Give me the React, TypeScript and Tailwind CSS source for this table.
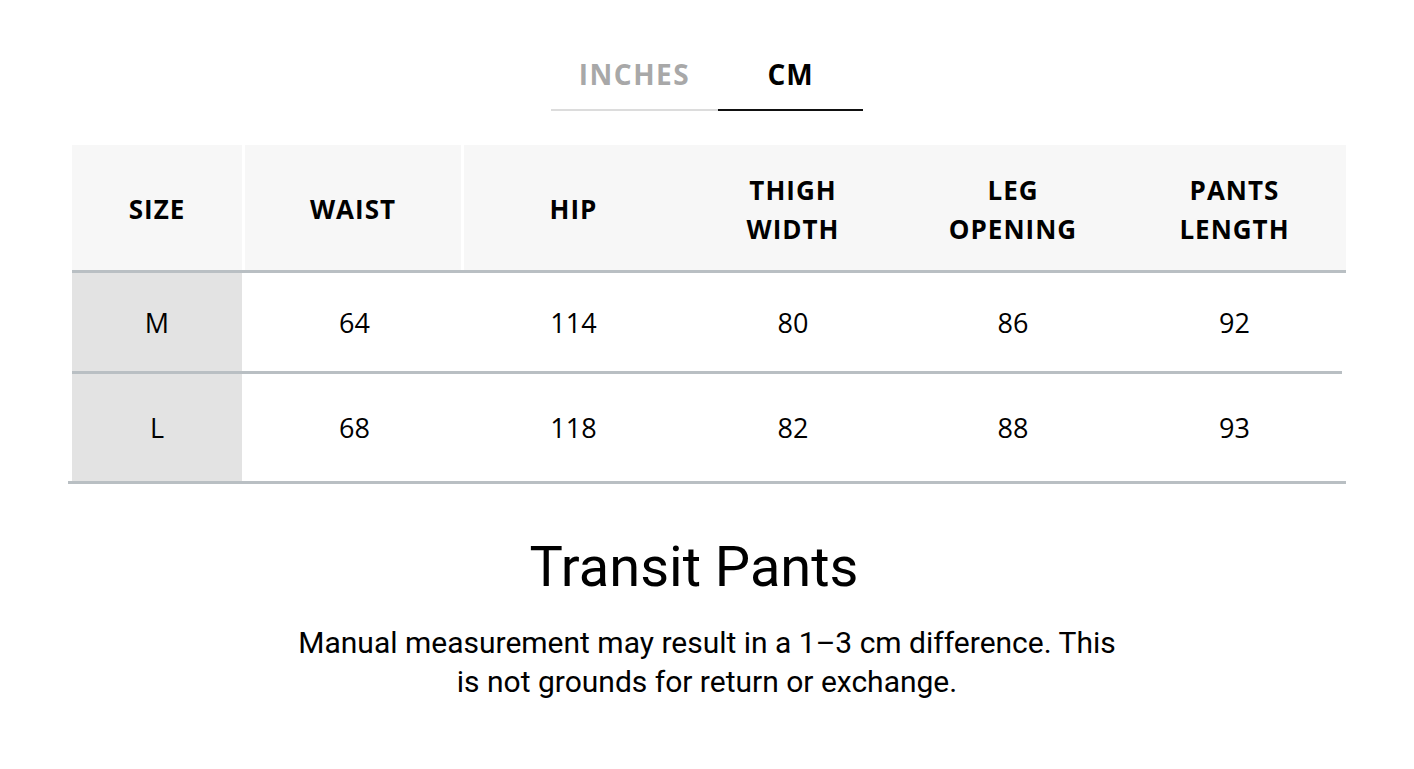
import React from "react";

const headW = ["w-[173px]", "w-[219px]", "w-[219px]", "w-[220px]", "w-[220px]", "w-[223px]"];
const bodyW = ["w-[170px]", "w-[222px]", "w-[219px]", "w-[220px]", "w-[220px]", "w-[223px]"];

const headers = [["SIZE"], ["WAIST"], ["HIP"], ["THIGH", "WIDTH"], ["LEG", "OPENING"], ["PANTS", "LENGTH"]];

const rows = [
  { vals: ["M", "64", "114", "80", "86", "92"], h: "h-[98px]" },
  { vals: ["L", "68", "118", "82", "88", "93"], h: "h-[107px]" },
];

export default function App() {
  return (
    <div className="w-[1414px] h-[769px] bg-white text-black" style={{ fontFamily: "'Open Sans', 'Noto Sans', sans-serif" }}>
      {/* Tabs */}
      <div className="flex justify-center pt-[56px]">
        <div className="flex">
          <div className="w-[167px] h-[55px] flex items-start justify-center border-b-2 border-[#dcdcdc]">
            <span className="text-[28px] leading-[37px] font-bold tracking-[1.5px] text-[#a8a8a8]">INCHES</span>
          </div>
          <div className="w-[145px] h-[55px] flex items-start justify-center border-b-2 border-[#111111]">
            <span className="text-[28px] leading-[37px] font-bold tracking-[1px] text-black">CM</span>
          </div>
        </div>
      </div>

      {/* Table */}
      <div className="mt-[34px] ml-[68px] w-[1278px]">
        <div className="ml-[4px] flex h-[125px] bg-[#f7f7f7]">
          {headers.map((lines, i) => (
            <div
              key={i}
              className={`${headW[i]} flex flex-col items-center justify-center pt-[4px] text-[26px] leading-[39px] font-bold tracking-[1px] ${
                i === 0 || i === 1 ? "border-r-[3px] border-white" : ""
              }`}
            >
              {lines.map((l) => (
                <span key={l}>{l}</span>
              ))}
            </div>
          ))}
        </div>
        <div className="ml-[4px] h-[3px] bg-[#b9bfc3]" />
        {rows.map((r, ri) => (
          <React.Fragment key={ri}>
            <div className={`ml-[4px] flex ${r.h}`}>
              {r.vals.map((v, i) => (
                <div
                  key={i}
                  className={`${bodyW[i]} ${i === 0 ? "bg-[#e3e3e3]" : ""} ${i === 1 ? "pl-[3px]" : ""} flex items-center justify-center text-[27px] leading-none`}
                >
                  <span>{v}</span>
                </div>
              ))}
            </div>
            <div className={`h-[3px] bg-[#b9bfc3] ${ri === 0 ? "ml-[4px] mr-[4px]" : ""}`} />
          </React.Fragment>
        ))}
      </div>

      {/* Title */}
      <div className="flex flex-col items-center mt-[53px]" style={{ fontFamily: "Roboto, 'Open Sans', sans-serif" }}>
        <h1 className="mr-[26px] text-[56px] leading-[60px] font-normal tracking-[0px]">Transit Pants</h1>
        <p className="mt-[26px] text-center text-[30px] leading-[39px] font-normal">
          Manual measurement may result in a 1–3 cm difference. This
          <br />
          is not grounds for return or exchange.
        </p>
      </div>
    </div>
  );
}
